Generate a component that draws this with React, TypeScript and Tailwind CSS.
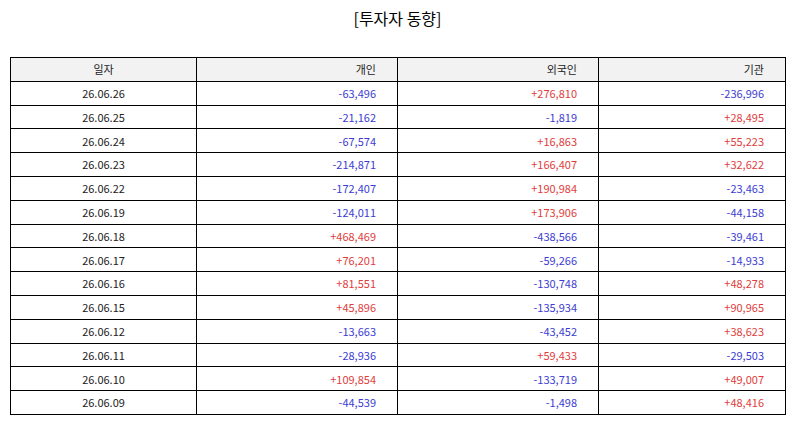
const rows: [string, string, string, string][] = [
  ["26.06.26", "-63,496", "+276,810", "-236,996"],
  ["26.06.25", "-21,162", "-1,819", "+28,495"],
  ["26.06.24", "-67,574", "+16,863", "+55,223"],
  ["26.06.23", "-214,871", "+166,407", "+32,622"],
  ["26.06.22", "-172,407", "+190,984", "-23,463"],
  ["26.06.19", "-124,011", "+173,906", "-44,158"],
  ["26.06.18", "+468,469", "-438,566", "-39,461"],
  ["26.06.17", "+76,201", "-59,266", "-14,933"],
  ["26.06.16", "+81,551", "-130,748", "+48,278"],
  ["26.06.15", "+45,896", "-135,934", "+90,965"],
  ["26.06.12", "-13,663", "-43,452", "+38,623"],
  ["26.06.11", "-28,936", "+59,433", "-29,503"],
  ["26.06.10", "+109,854", "-133,719", "+49,007"],
  ["26.06.09", "-44,539", "-1,498", "+48,416"],
];

function Num({ value }: { value: string }) {
  const color = value.startsWith("+") ? "text-[#e03c3c]" : "text-[#3c3cd2]";
  return <td className={`border border-black pr-[21px] text-right ${color}`}>{value}</td>;
}

export default function App() {
  return (
    <div
      className="h-[425px] w-[795px] bg-white px-[10px] pt-[6px] text-[#222]"
      style={{ fontFamily: '"Noto Sans CJK KR", "Noto Sans", sans-serif' }}
    >
      <h1 className="text-center text-[16px] leading-[24px] text-black">[투자자 동향]</h1>
      <table className="mt-[27px] w-[775px] table-fixed border-collapse text-[11px]">
        <colgroup>
          <col className="w-[186px]" />
          <col className="w-[201px]" />
          <col className="w-[201px]" />
          <col className="w-[187px]" />
        </colgroup>
        <thead>
          <tr className="h-[23.8px] bg-[#f2f2f2]">
            <th className="border border-black text-center font-normal">일자</th>
            <th className="border border-black pr-[21px] text-right font-normal">개인</th>
            <th className="border border-black pr-[21px] text-right font-normal">외국인</th>
            <th className="border border-black pr-[21px] text-right font-normal">기관</th>
          </tr>
        </thead>
        <tbody>
          {rows.map(([date, a, b, c]) => (
            <tr key={date} className="h-[23.8px]">
              <td className="border border-black text-center">{date}</td>
              <Num value={a} />
              <Num value={b} />
              <Num value={c} />
            </tr>
          ))}
        </tbody>
      </table>
    </div>
  );
}
